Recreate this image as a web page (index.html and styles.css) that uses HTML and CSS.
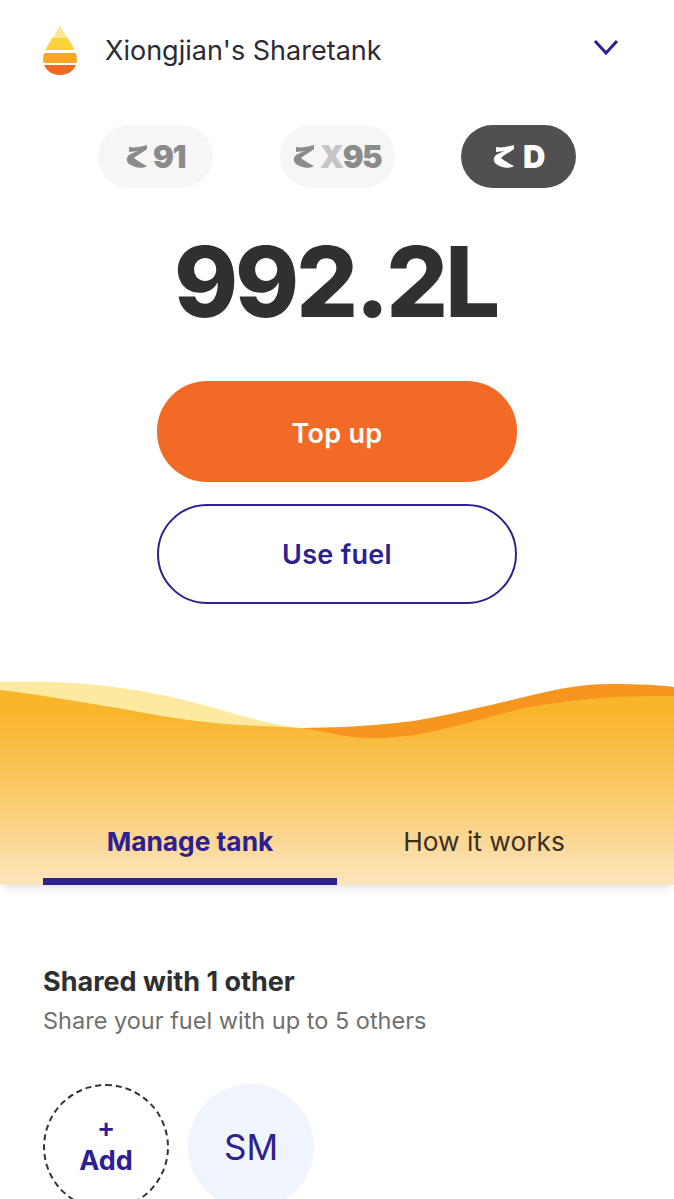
FILE: index.html
```html
<!DOCTYPE html>
<html lang="en">
<head>
  <meta charset="UTF-8">
  <meta name="viewport" content="width=device-width, initial-scale=1.0">
  <title>Sharetank</title>
  <link rel="stylesheet" href="styles.css">
</head>
<body>
  <header class="topbar">
    <svg class="drop" viewBox="0 0 34 50" aria-hidden="true">
      <clipPath id="dropshape">
        <path d="M17 0C20 7 26 14 30 22C33 28 34 31 34 35C33.500 44 26 50 17 50C8 50 .5 44 0 35C0 31 1 28 4 22C8 14 14 7 17 0Z"/>
      </clipPath>
      <g clip-path="url(#dropshape)">
        <rect width="34" height="13" fill="#fde795"/>
        <rect y="13" width="34" height="12" fill="#fcd23c"/>
        <rect y="28" width="34" height="10" fill="#f9a826"/>
        <rect y="40" width="34" height="10" fill="#ea6a24"/>
      </g>
    </svg>
    <span class="tank-name">Xiongjian's Sharetank</span>
    <svg class="chevron" viewBox="0 0 26 16" aria-hidden="true">
      <path d="M2 2L13 14L24 2" fill="none" stroke="#2e2090" stroke-width="3"/>
    </svg>
  </header>

  <div class="fuels">
    <div class="fuel">
      <svg class="z" viewBox="0 0 22 24" aria-hidden="true"><path d="M3 2C8 3 14 2 21 0L21 4C16 8 11 10 8 13C10 15 14 17 17 19L21 21C17 24 8 23 3 19C0 16 0 13 3 10C6 8 9 7 12 6C9 6 6 7 3 7Z"/></svg>
      <span>91</span>
    </div>
    <div class="fuel">
      <svg class="z" viewBox="0 0 22 24" aria-hidden="true"><path d="M3 2C8 3 14 2 21 0L21 4C16 8 11 10 8 13C10 15 14 17 17 19L21 21C17 24 8 23 3 19C0 16 0 13 3 10C6 8 9 7 12 6C9 6 6 7 3 7Z"/></svg>
      <span><span class="x">X</span>95</span>
    </div>
    <div class="fuel active">
      <svg class="z" viewBox="0 0 22 24" aria-hidden="true"><path d="M3 2C8 3 14 2 21 0L21 4C16 8 11 10 8 13C10 15 14 17 17 19L21 21C17 24 8 23 3 19C0 16 0 13 3 10C6 8 9 7 12 6C9 6 6 7 3 7Z"/></svg>
      <span>D</span>
    </div>
  </div>

  <div class="amount">992.2L</div>

  <div class="actions">
    <button class="btn primary" type="button">Top up</button>
    <button class="btn outline" type="button">Use fuel</button>
  </div>

  <section class="wave">
    <svg class="wave-bg" viewBox="0 0 674 205" preserveAspectRatio="none" aria-hidden="true">
      <defs>
        <linearGradient id="sand" x1="0" y1="0" x2="0" y2="1">
          <stop offset="0.12" stop-color="#f9b52c"/>
          <stop offset="0.5" stop-color="#fbc864"/>
          <stop offset="1" stop-color="#fce5bd"/>
        </linearGradient>
      </defs>
      <path d="M0 2C60 0 110 4 172 17C215 27 255 42 300 48L0 60Z" fill="#fde99f"/>
      <path d="M290 48C350 48 400 44 430 38C465 31 490 25 516 19C550 11 575 4 610 4C640 4 660 5 674 7V60H290Z" fill="#f6961f"/>
      <path d="M0 10C45 15 90 24 129 30C160 36 190 41 215 43C245 46 275 46 301 48C325 51 345 58 370 58C392 58 412 56 430 52C460 46 490 36 516 30C545 24 575 20 602 18C630 16 655 16 674 16V205H0Z" fill="url(#sand)"/>
    </svg>
    <nav class="tabs">
      <a class="tab current">Manage tank</a>
      <a class="tab">How it works</a>
    </nav>
  </section>

  <section class="shared">
    <h2>Shared with 1 other</h2>
    <p>Share your fuel with up to 5 others</p>
    <div class="people">
      <div class="circle add">
        <span class="plus">+</span>
        <span>Add</span>
      </div>
      <div class="circle member">SM</div>
    </div>
  </section>
</body>
</html>
```

FILE: styles.css
```css
html, body{
  margin: 0;
  height: 1199px;
  overflow: hidden;
}
body{
  background-color: #fff;
  color: #2f2f2f;
  font-family: "Inter", "Liberation Sans", sans-serif;
}

.topbar{
  height: 100px;
  padding: 0 55px 0 43px;
  display: flex;
  align-items: center;
}
.drop{
  width: 34px;
  height: 50px;
  margin-right: 28px;
}
.tank-name{
  flex: 1;
  font-size: 27px;
  color: #2c2a33;
}
.chevron{
  width: 26px;
  height: 16px;
  margin-bottom: 6px;
}

.fuels{
  margin-top: 25px;
  padding: 0 98px;
  display: flex;
  justify-content: space-between;
}
.fuel{
  width: 115px;
  height: 63px;
  border-radius: 32px;
  background-color: #f6f6f6;
  color: #8b8b8b;
  fill: #8b8b8b;
  display: flex;
  align-items: center;
  justify-content: center;
  gap: 5px;
  font-size: 31px;
  font-weight: 900;
  letter-spacing: -1.5px;
}
.fuel.active{
  background-color: #505050;
  color: #fff;
  fill: #fff;
  gap: 8px;
}
.z{
  width: 22px;
  height: 24px;
}
.x{
  color: #c6c6c6;
}

.amount{
  margin-top: 44px;
  height: 100px;
  padding-right: 3px;
  line-height: 100px;
  text-align: center;
  font-size: 97px;
  font-weight: 800;
  letter-spacing: -3px;
  color: #303030;
}

.actions{
  margin-top: 49px;
  display: flex;
  flex-direction: column;
  align-items: center;
  gap: 22px;
}
.btn{
  width: 360px;
  height: 100px;
  border-radius: 50px;
  font-family: inherit;
  font-size: 27px;
  font-weight: 600;
  letter-spacing: 0.3px;
}
.primary{
  height: 101px;
  padding-top: 4px;
  background-color: #f26a25;
  border: none;
  color: #fff;
}
.outline{
  background-color: #fff;
  border: 2px solid #2e2090;
  color: #2e2090;
}

.wave{
  margin-top: 76px;
  height: 205px;
  position: relative;
  display: flex;
  align-items: flex-end;
  padding: 0 43px;
  box-shadow: 0 6px 8px -4px rgba(90, 90, 120, 0.2);
}
.wave-bg{
  position: absolute;
  left: 0;
  top: 0;
  width: 100%;
  height: 100%;
}
.tabs{
  position: relative;
  flex: 1;
  display: flex;
}
.tab{
  flex: 1;
  height: 73px;
  box-sizing: border-box;
  padding-top: 14px;
  text-align: center;
  font-size: 26.300px;
  color: #3b2f20;
}
.tab.current{
  color: #2e2090;
  font-weight: 700;
  border-bottom: 7px solid #2e2090;
}

.shared{
  padding: 80px 43px 0;
}
.shared h2{
  margin: 0;
  font-size: 27px;
  line-height: 34px;
  font-weight: 700;
}
.shared p{
  margin: 6px 0 0;
  font-size: 23.500px;
  line-height: 32px;
  color: #6f6f6f;
}
.people{
  margin-top: 47px;
  display: flex;
  gap: 19px;
}
.circle{
  width: 126px;
  height: 126px;
  box-sizing: border-box;
  border-radius: 50%;
  display: flex;
  flex-direction: column;
  align-items: center;
  justify-content: center;
  color: #2e2090;
}
.add{
  padding-bottom: 5px;
  border: 2px dashed #333;
  font-size: 27px;
  font-weight: 700;
  line-height: 30px;
}
.plus{
  margin-bottom: 3px;
  font-weight: 600;
}
.member{
  background-color: #f0f4fd;
  font-size: 35px;
}
```
